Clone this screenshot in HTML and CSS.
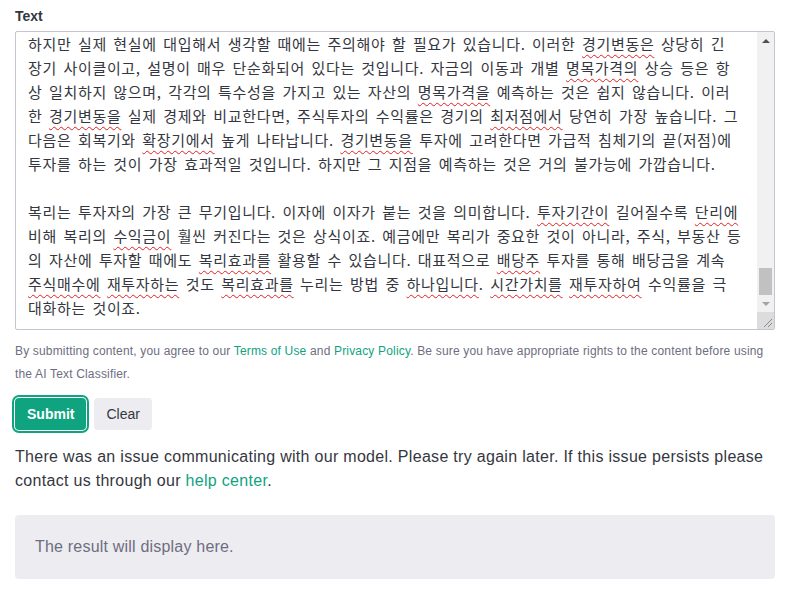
FILE: index.html
```html
<!DOCTYPE html>
<html lang="ko">
<head>
<meta charset="utf-8">
<title>AI Text Classifier</title>
<link rel="stylesheet" href="styles.css">
</head>
<body>
<main class="page">
  <label class="field-label">Text</label>
  <div class="textbox">
    <div class="textbox-content">
      <div class="ln">하지만 실제 현실에 대입해서 생각할 때에는 주의해야 할 필요가 있습니다. 이러한 <span class="sp">경기변동은</span> 상당히 긴</div>
      <div class="ln">장기 사이클이고, 설명이 매우 단순화되어 있다는 것입니다. 자금의 이동과 개별 <span class="sp">명목가격의</span> 상승 등은 항</div>
      <div class="ln">상 일치하지 않으며, 각각의 특수성을 가지고 있는 자산의 <span class="sp">명목가격을</span> 예측하는 것은 쉽지 않습니다. 이러</div>
      <div class="ln">한 <span class="sp">경기변동을</span> 실제 경제와 비교한다면, 주식투자의 수익률은 경기의 <span class="sp">최저점에서</span> 당연히 가장 높습니다. 그</div>
      <div class="ln">다음은 회복기와 <span class="sp">확장기에서</span> 높게 나타납니다. <span class="sp">경기변동을</span> 투자에 고려한다면 가급적 침체기의 끝(저점)에</div>
      <div class="ln">투자를 하는 것이 가장 효과적일 것입니다. 하지만 그 지점을 예측하는 것은 거의 불가능에 가깝습니다.</div>
      <div class="ln blank"></div>
      <div class="ln">복리는 투자자의 가장 큰 무기입니다. 이자에 이자가 붙는 것을 의미합니다. <span class="sp">투자기간이</span> 길어질수록 <span class="sp">단리에</span></div>
      <div class="ln">비해 복리의 <span class="sp">수익금이</span> 훨씬 커진다는 것은 상식이죠. 예금에만 복리가 중요한 것이 아니라, 주식, 부동산 등</div>
      <div class="ln">의 자산에 투자할 때에도 <span class="sp">복리효과를</span> 활용할 수 있습니다. 대표적으로 <span class="sp">배당주</span> 투자를 통해 배당금을 계속</div>
      <div class="ln"><span class="sp">주식매수에</span> <span class="sp">재투자하는</span> 것도 <span class="sp">복리효과를</span> 누리는 방법 중 <span class="sp">하나입니다</span>. <span class="sp">시간가치를</span> <span class="sp">재투자하여</span> 수익률을 극</div>
      <div class="ln">대화하는 것이죠.</div>
    </div>
    <div class="scrollbar">
      <div class="sb-btn"><span class="arrow-up"></span></div>
      <div class="sb-track"><div class="sb-thumb" style="margin-top:219px"></div></div>
      <div class="sb-btn"><span class="arrow-down"></span></div>
      <div class="sb-corner">
        <svg width="17" height="17" viewBox="0 0 17 17"><path d="M7 15 L15 7 M11 15 L15 11" stroke="#8a8a8a" stroke-width="1" fill="none"/></svg>
      </div>
    </div>
  </div>

  <p class="disclaimer">By submitting content, you agree to our <a href="#">Terms of Use</a> and <a href="#">Privacy Policy</a>. Be sure you have appropriate rights to the content before using the AI Text Classifier.</p>

  <div class="actions">
    <button class="btn btn-primary">Submit</button>
    <button class="btn btn-secondary">Clear</button>
  </div>

  <p class="message">There was an issue communicating with our model. Please try again later. If this issue persists please contact us through our <a href="#">help center</a>.</p>

  <div class="result">The result will display here.</div>
</main>
</body>
</html>
```

FILE: styles.css
```css
html, body {
  margin: 0;
  padding: 0;
  background: #ffffff;
}

body {
  font-family: "Liberation Sans", Arial, sans-serif;
  color: #353740;
}

.page {
  padding: 6px 11px 0 15px;
  display: flex;
  flex-direction: column;
}

.field-label {
  font-size: 14px;
  font-weight: 700;
  line-height: 20px;
  color: #353740;
  margin-bottom: 5px;
}

.textbox {
  display: flex;
  height: 297px;
  border: 1px solid #c5c5d2;
  border-radius: 2px;
  overflow: hidden;
}

.textbox-content {
  flex: 1;
  padding: 0 12px 0 12px;
  font-family: "Noto Sans CJK KR", "Noto Sans", sans-serif;
  font-size: 15px;
  line-height: 24px;
  color: #353740;
  letter-spacing: 0.68px;
  word-spacing: 1.6px;
  overflow: hidden;
}

.ln {
  white-space: nowrap;
  height: 24px;
}

.sp {
  text-decoration: underline wavy #e02020;
  text-decoration-thickness: 1px;
  text-underline-offset: 4px;
  text-decoration-skip-ink: none;
}

.scrollbar {
  width: 17px;
  background: #f1f1f1;
  display: flex;
  flex-direction: column;
}

.sb-btn {
  height: 17px;
  display: flex;
  align-items: center;
  justify-content: center;
}

.arrow-up {
  width: 0;
  height: 0;
  border-left: 4px solid transparent;
  border-right: 4px solid transparent;
  border-bottom: 4px solid #505050;
}

.arrow-down {
  width: 0;
  height: 0;
  border-left: 4px solid transparent;
  border-right: 4px solid transparent;
  border-top: 4px solid #a3a3a3;
}

.sb-track {
  flex: 1;
  display: flex;
  flex-direction: column;
}

.sb-thumb {
  height: 27px;
  margin-left: 2px;
  margin-right: 2px;
  background: #c1c1c1;
}

.sb-corner {
  height: 17px;
  background: #dcdcdc;
}

.sb-corner svg {
  display: block;
}

.disclaimer {
  margin: 10px 0 0 0;
  font-size: 12px;
  line-height: 23px;
  letter-spacing: 0.17px;
  color: #6e6e80;
}

a {
  color: #10a37f;
  text-decoration: none;
}

.actions {
  display: flex;
  gap: 8px;
  margin-top: 12px;
}

.btn {
  height: 32px;
  padding: 0 12px;
  border: none;
  border-radius: 4px;
  font-family: "Liberation Sans", Arial, sans-serif;
  font-size: 14px;
  cursor: pointer;
}

.btn-primary {
  background: #10a37f;
  color: #ffffff;
  font-weight: 700;
  box-shadow: 0 0 0 1px #ffffff, 0 0 0 3px #10a37f;
}

.btn-secondary {
  background: #ececf1;
  color: #353740;
}

.message {
  margin: 15px 0 0 0;
  font-size: 16px;
  line-height: 24px;
  letter-spacing: 0.3px;
  color: #353740;
}

.result {
  margin-top: 22px;
  background: #ececf1;
  border-radius: 4px;
  padding: 20px;
  font-size: 16px;
  line-height: 24px;
  letter-spacing: 0.2px;
  color: #6e6e80;
}
```
